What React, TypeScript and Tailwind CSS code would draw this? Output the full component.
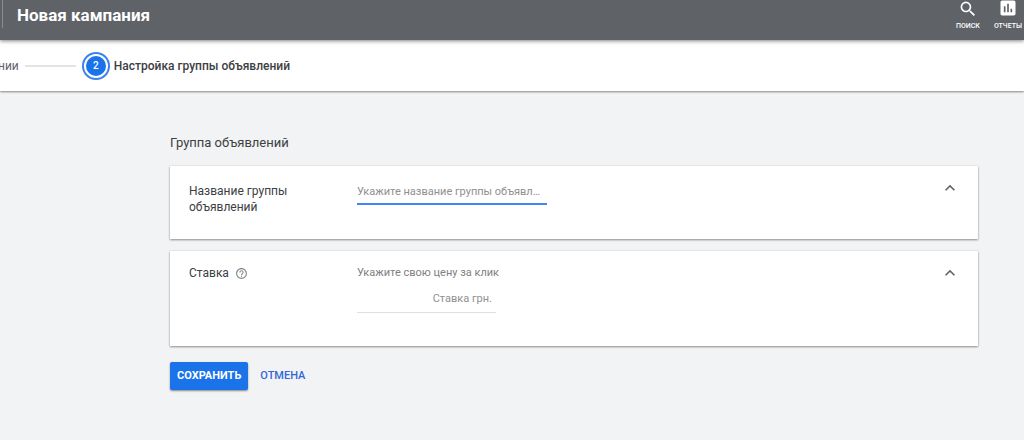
import React, { useState } from 'react';
import { MdAssessment, MdExpandLess, MdHelpOutline, MdSearch } from 'react-icons/md';

const Header: React.FC = () => {
  return (
    <header className="relative z-20 flex h-10 items-start justify-between bg-[#5f6368] text-white shadow-[0_1px_4px_rgba(0,0,0,0.5)]">
      <div className="flex h-7 items-center">
        <span className="ml-0.5 h-full w-px bg-[#8a8d91]" />
        <h1 className="ml-3.5 mt-0.5 text-[17px] font-bold leading-7">Новая кампания</h1>
      </div>

      <nav className="flex gap-3.5 pr-0.5">
        <button type="button" className="flex flex-col items-center">
          <MdSearch className="h-[18px] w-5 scale-110" />
          <span className="mt-0.5 text-[7px] font-medium uppercase leading-3">Поиск</span>
        </button>
        <button type="button" className="flex flex-col items-center">
          <MdAssessment className="-mt-0.5 size-5" />
          <span className="mt-0.5 text-[7px] font-medium uppercase leading-3">Отчеты</span>
        </button>
      </nav>
    </header>
  );
};

const Stepper: React.FC = () => {
  return (
    <ol className="relative z-10 flex h-[51px] items-center bg-white text-[12px] shadow-[0_1px_2px_rgba(0,0,0,0.45)]">
      <li className="-ml-0.5 flex items-center text-[#5f6368]">
        <span>нии</span>
        <span className="ml-1.5 h-0.5 w-[51px] bg-[#e3e4e6]" />
      </li>
      <li className="ml-1.5 flex items-center font-medium text-[#3c4043]">
        <span className="flex size-7 items-center justify-center rounded-full border-2 border-[#3b82ec]">
          <span className="flex size-5 items-center justify-center rounded-full bg-[#1a73e8] text-[10px] text-white">
            2
          </span>
        </span>
        <span className="ml-1">Настройка группы объявлений</span>
      </li>
    </ol>
  );
};

type CardProps = {
  label: React.ReactNode;
  className: string;
  bodyClassName: string;
  children: React.ReactNode;
};

const Card: React.FC<CardProps> = ({ label, className, bodyClassName, children }) => {
  return (
    <section
      className={`flex items-start bg-white pl-[19px] pr-[18px] pt-3 shadow-[0_1px_2px_rgba(0,0,0,0.4),0_0_2px_rgba(0,0,0,0.1)] ${className}`}
    >
      <div className={`flex min-w-0 flex-1 items-start ${bodyClassName}`}>
        <div className="w-[168px] shrink-0 text-[12px] leading-4 text-[#3c4043]">{label}</div>
        <div className="min-w-0 flex-1">{children}</div>
      </div>
      <button type="button" aria-label="Свернуть" className="text-[#5f6368]">
        <MdExpandLess className="size-5" />
      </button>
    </section>
  );
};

const App: React.FC = () => {
  const [name, setName] = useState('');
  const [bid, setBid] = useState('');

  return (
    <div className="min-h-screen bg-[#f1f3f4] font-['Roboto',sans-serif]">
      <Header />
      <Stepper />

      <main className="ml-[170px] mr-[46px] pt-[42px]">
        <h2 className="text-[13px] leading-5 text-[#3c4043]">Группа объявлений</h2>

        <form className="mt-[13px]" onSubmit={(e) => e.preventDefault()}>
          {/* Group name */}
          <Card
            className="min-h-[73px]"
            bodyClassName="pt-[5px]"
            label={
              <label htmlFor="group-name" className="block w-28">
                Название группы объявлений
              </label>
            }
          >
            <input
              id="group-name"
              type="text"
              value={name}
              onChange={(e) => setName(e.target.value)}
              placeholder="Укажите название группы объявлений"
              className="block h-[22px] w-[190px] truncate border-b-2 border-[#4285f4] pb-1 pr-1 text-[11px] outline-none placeholder:text-[#8f8f8f]"
            />
          </Card>

          {/* Bid */}
          <Card
            className="mt-3 min-h-[95px]"
            bodyClassName="pt-0.5"
            label={
              <span className="flex items-center gap-1.5">
                Ставка
                <MdHelpOutline className="size-[13px] text-[#80868b]" />
              </span>
            }
          >
            <label htmlFor="bid" className="block text-[11px] leading-4 text-[#808080]">
              Укажите свою цену за клик
            </label>
            <input
              id="bid"
              type="text"
              value={bid}
              onChange={(e) => setBid(e.target.value)}
              placeholder="Ставка грн."
              className="mt-2 block h-6 w-[139px] border-b border-[#e0e0e0] pb-1 pr-1 text-right text-[11px] outline-none placeholder:text-[#8f8f8f]"
            />
          </Card>

          <div className="mt-4 flex items-center gap-3">
            <button
              type="submit"
              className="h-7 rounded-xs bg-[#1a73e8] px-[7px] text-[11px] font-bold uppercase text-white shadow-[0_1px_2px_rgba(0,0,0,0.45)]"
            >
              Сохранить
            </button>
            <button type="button" className="h-7 text-[11px] font-medium uppercase text-[#3367d6]">
              Отмена
            </button>
          </div>
        </form>
      </main>
    </div>
  );
};

export default App;
